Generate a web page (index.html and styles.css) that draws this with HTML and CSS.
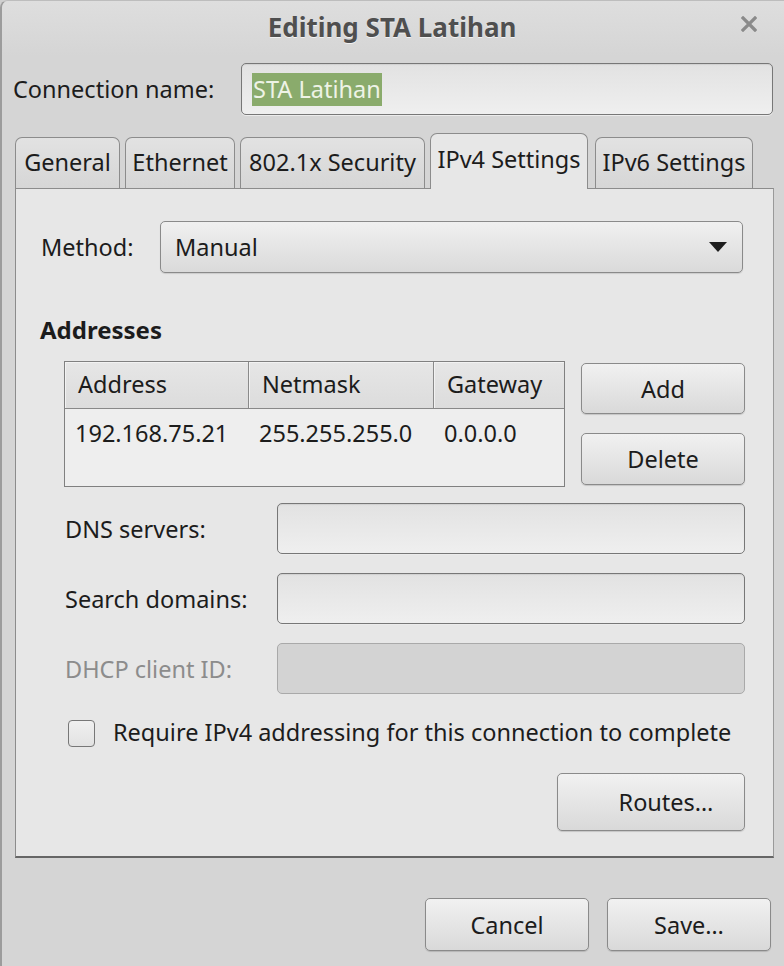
FILE: index.html
```html
<!DOCTYPE html>
<html>
<head>
<meta charset="utf-8">
<link rel="stylesheet" href="styles.css">
</head>
<body>
<div class="window">
  <div class="titlebar">
    <span class="title">Editing STA Latihan</span>
    <svg class="close" width="16" height="16" viewBox="0 0 16 16"><path d="M2 2 L14 14 M14 2 L2 14" stroke="#8a8a8a" stroke-width="3.2" stroke-linecap="square"/></svg>
  </div>
  <div class="conn-row">
    <span class="conn-label">Connection name:</span>
    <div class="entry conn-entry"><span class="sel">STA Latihan</span></div>
  </div>
  <div class="tabs">
    <div class="tab t-general">General</div>
    <div class="tab t-eth">Ethernet</div>
    <div class="tab t-sec">802.1x Security</div>
    <div class="tab active t-v4">IPv4 Settings</div>
    <div class="tab t-v6">IPv6 Settings</div>
  </div>
  <div class="panel">
    <div class="method-row">
      <span class="method-label">Method:</span>
      <div class="combo">
        <span>Manual</span>
        <svg class="arrow" width="18" height="10" viewBox="0 0 18 10"><path d="M0 0 H18 L9 10 Z" fill="#1e1e1e"/></svg>
      </div>
    </div>
    <div class="heading">Addresses</div>
    <div class="addr-row">
      <div class="table">
        <div class="thead">
          <div class="th c1">Address</div>
          <div class="th c2">Netmask</div>
          <div class="th c3">Gateway</div>
        </div>
        <div class="tbody">
          <div class="td c1">192.168.75.21</div>
          <div class="td c2">255.255.255.0</div>
          <div class="td c3">0.0.0.0</div>
        </div>
      </div>
      <div class="side-btns">
        <div class="btn add">Add</div>
        <div class="btn del">Delete</div>
      </div>
    </div>
    <div class="field-row first">
      <span class="f-label">DNS servers:</span>
      <div class="entry f-entry"></div>
    </div>
    <div class="field-row">
      <span class="f-label">Search domains:</span>
      <div class="entry f-entry"></div>
    </div>
    <div class="field-row">
      <span class="f-label disabled">DHCP client ID:</span>
      <div class="entry f-entry dis"></div>
    </div>
    <div class="check-row">
      <span class="checkbox"></span>
      <span>Require IPv4 addressing for this connection to complete</span>
    </div>
    <div class="routes-row">
      <div class="btn routes">Routes…</div>
    </div>
  </div>
  <div class="bottom">
    <div class="btn dlg">Cancel</div>
    <div class="btn dlg">Save…</div>
  </div>
</div>
</body>
</html>
```
FILE: styles.css
```css
* { box-sizing: border-box; }
html, body { margin: 0; padding: 0; background: #cfcfcf; }
body {
  font-family: "Noto Sans", "DejaVu Sans", sans-serif;
  font-size: 23.5px;
  color: #1c1c1c;
}
.window {
  width: 784px;
  height: 966px;
  background: #d5d5d5;
  border-left: 2px solid #9c9c9c;
  border-top: 1px solid #bdbdbd;
  border-top-left-radius: 8px;
  display: flex;
  flex-direction: column;
  overflow: hidden;
}
.titlebar {
  height: 55px;
  display: flex;
  align-items: center;
  justify-content: center;
  position: relative;
  background: linear-gradient(#dedede, #d5d5d5);
}
.title {
  font-weight: bold;
  font-size: 26px;
  color: #4f4f4f;
  text-shadow: 0 1px 0 #f2f2f2;
  margin-left: -2px;
  margin-top: -3px;
}
.close {
  position: absolute;
  right: 27px;
  top: 15px;
}
.conn-row {
  display: flex;
  align-items: center;
  margin-top: 7px;
  padding-left: 11px;
}
.conn-label { width: 228px; }
.entry {
  border: 1px solid #777;
  border-radius: 5px;
  background: linear-gradient(#e2e2e2, #efefef);
  box-shadow: inset 0 1px 1px rgba(0,0,0,0.08), 0 1px 0 #ececec;
}
.conn-entry {
  width: 532px;
  height: 52px;
  display: flex;
  align-items: center;
  padding-left: 10px;
}
.sel {
  background: #8aab6c;
  color: #eef3e6;
  line-height: 33px;
  padding: 0 1px;
}
.tabs {
  display: flex;
  align-items: flex-end;
  margin-top: 18px;
  padding-left: 13px;
  height: 55px;
  position: relative;
  z-index: 1;
}
.tab {
  height: 51px;
  margin-right: 5px;
  border: 1px solid #8c8c8c;
  border-bottom: none;
  border-radius: 7px 7px 0 0;
  background: linear-gradient(#e2e2e2, #d6d6d6);
  display: flex;
  align-items: center;
  justify-content: center;
  padding-bottom: 3px;
  white-space: nowrap;
}
.t-general { width: 105px; }
.t-eth { width: 110px; }
.t-sec { width: 185px; }
.t-v4 { width: 158px; margin-right: 7px; }
.t-v6 { width: 158px; }
.tab.active {
  height: 56px;
  margin-bottom: -1px;
  background: #e7e7e7;
  padding-bottom: 6px;
}
.panel {
  margin-left: 13px;
  width: 759px;
  height: 670px;
  background: #e7e7e7;
  border: 1px solid #8c8c8c;
  border-bottom: 2px solid #666;
  border-right-color: #9a9a9a;
  padding: 0 28px 0 25px;
  display: flex;
  flex-direction: column;
}
.method-row {
  display: flex;
  align-items: center;
  margin-top: 32px;
}
.method-label { width: 119px; }
.combo {
  flex: 1;
  height: 52px;
  border: 1px solid #8a8a8a;
  border-radius: 5px;
  background: linear-gradient(#f0f0f0, #dadada);
  box-shadow: 0 1px 1px rgba(0,0,0,0.12);
  display: flex;
  align-items: center;
  justify-content: space-between;
  padding: 0 15px 0 14px;
  margin-right: 2px;
}
.heading {
  font-weight: bold;
  font-size: 24px;
  margin-top: 42px;
  line-height: 30px;
  margin-left: -1px;
}
.addr-row {
  display: flex;
  margin-top: 16px;
  padding-left: 23px;
}
.table {
  width: 501px;
  height: 126px;
  border: 1px solid #808080;
  background: #eeeeee;
  display: flex;
  flex-direction: column;
}
.thead {
  display: flex;
  height: 47px;
  border-bottom: 1px solid #888;
}
.th {
  background: linear-gradient(#e6e6e6, #dcdcdc);
  display: flex;
  align-items: center;
  padding-left: 13px;
  border-right: 1px solid #8a8a8a;
  box-shadow: inset 1px 1px 0 #f2f2f2;
  padding-bottom: 2px;
}
.th.c3 { border-right: none; }
.c1 { width: 184px; }
.c2 { width: 185px; }
.c3 { flex: 1; }
.tbody {
  display: flex;
  padding-top: 8px;
}
.td { padding-left: 10px; }
.side-btns {
  display: flex;
  flex-direction: column;
  margin-left: 16px;
  padding-top: 2px;
}
.btn {
  border: 1px solid #8a8a8a;
  border-radius: 5px;
  background: linear-gradient(#f1f1f1, #d9d9d9);
  box-shadow: 0 1px 1px rgba(0,0,0,0.15);
  display: flex;
  align-items: center;
  justify-content: center;
}
.add { width: 164px; height: 51px; }
.del { width: 164px; height: 52px; margin-top: 19px; }
.field-row {
  display: flex;
  align-items: center;
  padding-left: 24px;
  margin-top: 19px;
}
.field-row.first { margin-top: 16px; }
.f-label { width: 212px; }
.f-label.disabled { color: #8c8c8c; }
.f-entry { width: 468px; height: 51px; }
.f-entry.dis {
  background: #d3d3d3;
  border-color: #a9a9a9;
  box-shadow: none;
}
.check-row {
  display: flex;
  align-items: center;
  margin-top: 20px;
  padding-left: 27px;
  height: 36px;
}
.checkbox {
  width: 27px;
  height: 27px;
  border: 1px solid #777;
  border-radius: 4px;
  background: linear-gradient(#f0f0f0, #e2e2e2);
  margin-right: 18px;
  margin-top: 3px;
}
.routes-row {
  display: flex;
  justify-content: flex-end;
  margin-top: 23px;
}
.routes { width: 188px; height: 58px; padding-left: 30px; }
.bottom {
  display: flex;
  justify-content: flex-end;
  margin-top: 40px;
  padding-right: 13px;
}
.dlg { width: 164px; height: 53px; margin-left: 18px; }
```
